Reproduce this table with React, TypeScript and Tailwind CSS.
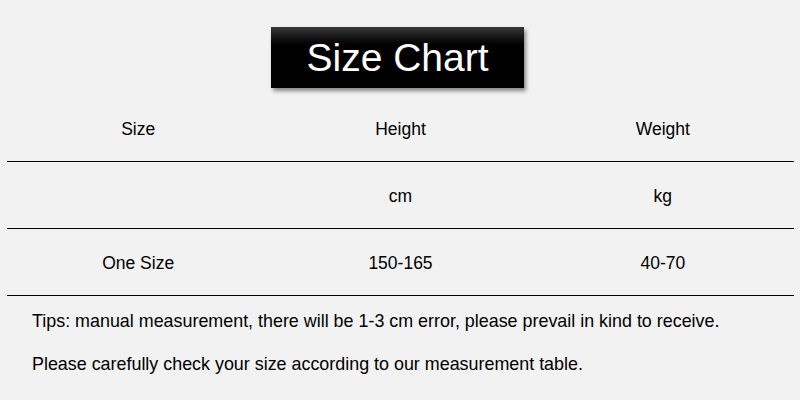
const rows = [
  ["Size", "Height", "Weight"],
  ["", "cm", "kg"],
  ["One Size", "150-165", "40-70"],
]

export default function App() {
  return (
    <div className="w-[800px] h-[400px] bg-[#f2f2f2] text-black font-['Liberation_Sans',Arial,sans-serif] overflow-hidden">
      <div className="flex justify-center pt-[27px]">
        <div className="mr-[5px] w-[253px] h-[61px] flex items-center justify-center bg-gradient-to-b from-[#3a3a3a] via-[#000] via-40% to-[#000] shadow-[2px_3px_4px_rgba(0,0,0,0.45)]">
          <span className="text-white text-[39px] leading-none pb-[1px]">Size Chart</span>
        </div>
      </div>

      <div className="mx-[7px] w-[787px] mt-[7px]">
        {rows.map((row, i) => (
          <div key={i} className="grid grid-cols-3 h-[67px] border-b border-black">
            {row.map((cell, j) => (
              <div key={j} className="flex items-center justify-center pt-[3px] text-[17.5px]">
                {cell}
              </div>
            ))}
          </div>
        ))}
      </div>

      <div className="pl-[32px] pt-[4px] text-[17.9px] leading-[43px]">
        <p>Tips: manual measurement, there will be 1-3 cm error, please prevail in kind to receive.</p>
        <p>Please carefully check your size according to our measurement table.</p>
      </div>
    </div>
  )
}
